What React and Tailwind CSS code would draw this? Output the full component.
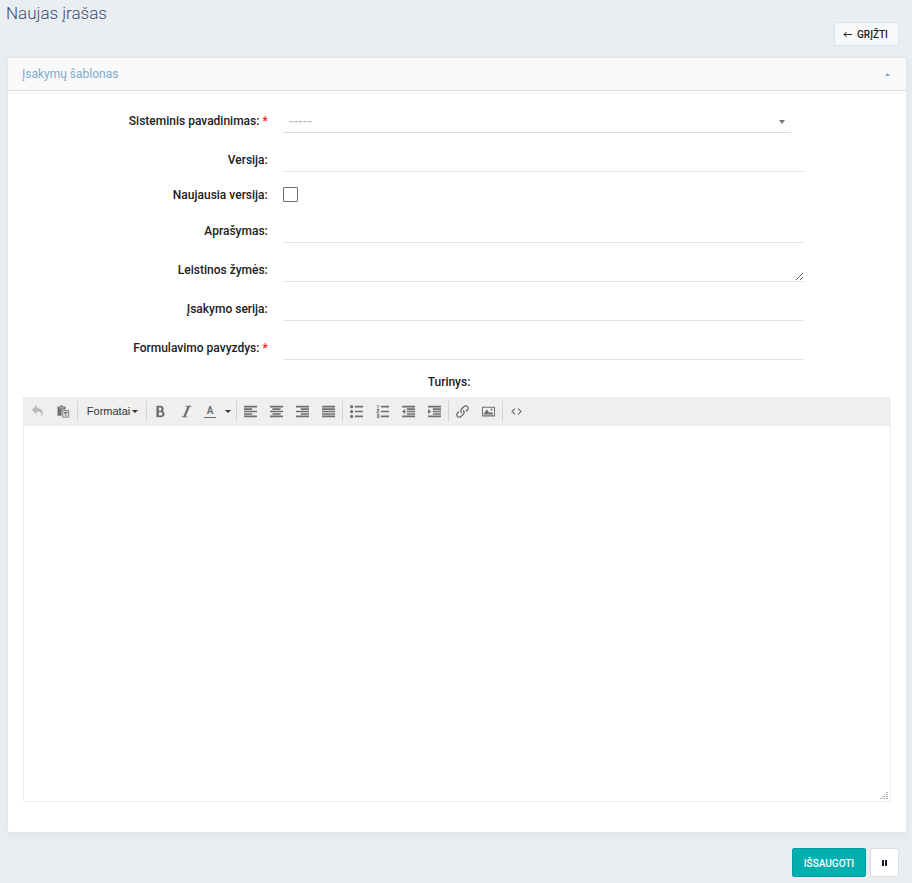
import React from 'react';
import { ImLink } from 'react-icons/im';

const ICONS = {
  undo: 'M761.862 1024c113.726-206.032 132.888-520.306-313.862-509.824v253.824l-384-384 384-384v248.372c534.962-13.942 594.57 472.214 313.862 775.628z',
  paste: 'M40 110h220c0-60 40-100 96-100s96 40 96 100h220v246h-312v500h-320zM180 190v70h352v-70zM416 416h544v576h-544zM490 490v428h396v-428zM560 550h256v130h-50l-14-50h-28v200l34 8v40h-140v-40l34-8v-200h-28l-14 50h-50z',
  bold: 'M707.88 484.652c37.498-44.542 60.12-102.008 60.12-164.652 0-141.16-114.842-256-256-256h-320v896h384c141.158 0 256-114.842 256-256 0-92.956-49.798-174.496-124.12-219.348zM384 192h101.5c55.968 0 101.5 57.42 101.5 128s-45.532 128-101.5 128h-101.5v-256zM543 832h-159v-256h159c58.45 0 106 57.42 106 128s-47.55 128-106 128z',
  italic: 'M896 64v64h-128l-320 768h128v64h-448v-64h128l320-768h-128v-64z',
  left: 'M0 64h1024v128h-1024zM0 256h640v128h-640zM0 448h1024v128h-1024zM0 640h640v128h-640zM0 832h1024v128h-1024z',
  center: 'M0 64h1024v128h-1024zM192 256h640v128h-640zM0 448h1024v128h-1024zM192 640h640v128h-640zM0 832h1024v128h-1024z',
  right: 'M0 64h1024v128h-1024zM384 256h640v128h-640zM0 448h1024v128h-1024zM384 640h640v128h-640zM0 832h1024v128h-1024z',
  justify: 'M0 64h1024v128h-1024zM0 256h1024v128h-1024zM0 448h1024v128h-1024zM0 640h1024v128h-1024zM0 832h1024v128h-1024z',
  bullist: 'M384 64h640v128h-640zM384 448h640v128h-640zM384 832h640v128h-640zM0 128a128 128 0 1 0 256 0a128 128 0 1 0-256 0zM0 512a128 128 0 1 0 256 0a128 128 0 1 0-256 0zM0 896a128 128 0 1 0 256 0a128 128 0 1 0-256 0z',
  numlist: 'M384 832h640v128h-640zM384 448h640v128h-640zM384 64h640v128h-640zM192 0v256h-64v-192h-64v-64zM128 526v50h128v64h-192v-146l128-60v-50h-128v-64h192v146zM256 704v320h-192v-64h128v-64h-128v-64h128v-64h-128v-64z',
  outdent: 'M0 64h1024v128h-1024zM384 256h640v128h-640zM384 448h640v128h-640zM384 640h640v128h-640zM0 832h1024v128h-1024zM256 320v384l-256-192z',
  indent: 'M0 64h1024v128h-1024zM384 256h640v128h-640zM384 448h640v128h-640zM384 640h640v128h-640zM0 832h1024v128h-1024zM0 704v-384l256 192z',
  image: 'M0 128v768h1024v-768zM944 816h-864v-608h864zM672 352a80 80 0 1 0 160 0a80 80 0 1 0-160 0zM160 752v-96l224-320 192 288 96-80 192 112v96z',
  code: 'M350 256l66 60-196 196 196 196-66 60-256-256zM674 256l-66 60 196 196-196 196 66 60 256-256z',
};

const Icon = ({ name }) => (
  <svg viewBox="0 0 1024 1024" className="h-[13px] w-[13px]" fill="currentColor" fillRule="evenodd">
    <path d={ICONS[name]} />
  </svg>
);

const Caret = ({ className }) => (
  <svg viewBox="0 0 6 3" preserveAspectRatio="none" className={className} fill="currentColor">
    <path d="M0 0h6L3 3z" />
  </svg>
);

const ToolButton = ({ label, children, disabled }) => (
  <button
    type="button"
    aria-label={label}
    disabled={disabled}
    className="flex h-[28px] w-[26px] items-center justify-center pr-px text-[#6f6f6f] disabled:text-[#b8b8b8]"
  >
    {children}
  </button>
);

const Separator = () => <span className="mr-px h-[21px] w-px bg-[#d4d4d4]" />;

const FormRow = ({ id, label, required, children }) => (
  <div className="mb-[11px] flex gap-[15px]">
    <label
      htmlFor={id}
      className="flex w-[28.2%] shrink-0 items-center justify-end pt-[3px] text-[12px] font-medium whitespace-nowrap text-[#212121]"
    >
      {label}:{required && <span className="ml-[3px] text-[#ff1a1a]">*</span>}
    </label>
    {children}
  </div>
);

const inputClass =
  'block h-[28px] w-[60%] border-b border-[#dfe5e6] bg-transparent px-[6px] text-[12px] outline-none';

const Toolbar = () => (
  <div className="flex h-[29px] items-center bg-[#efefef] pl-px">
    <ToolButton label="Atšaukti" disabled>
      <Icon name="undo" />
    </ToolButton>
    <ToolButton label="Įklijuoti kaip tekstą">
      <Icon name="paste" />
    </ToolButton>
    <Separator />
    <button
      type="button"
      className="flex h-[28px] w-[67px] items-center justify-center gap-[2px] font-['Liberation_Sans',sans-serif] text-[11px] text-[#333333]"
    >
      Formatai
      <Caret className="h-[3px] w-[6px]" />
    </button>
    <Separator />
    <ToolButton label="Paryškintas">
      <Icon name="bold" />
    </ToolButton>
    <ToolButton label="Kursyvinis">
      <Icon name="italic" />
    </ToolButton>
    <button
      type="button"
      aria-label="Teksto spalva"
      className="flex h-[28px] w-[36px] items-center justify-between pr-[5px] pl-[4px] text-[#333333]"
    >
      <span className="w-[12px] border-b border-[#6f6f6f] text-center text-[10px] leading-[12px] font-bold text-[#6f6f6f]">
        A
      </span>
      <Caret className="h-[3px] w-[6px]" />
    </button>
    <Separator />
    <ToolButton label="Lygiuoti kairėje">
      <Icon name="left" />
    </ToolButton>
    <ToolButton label="Centruoti">
      <Icon name="center" />
    </ToolButton>
    <ToolButton label="Lygiuoti dešinėje">
      <Icon name="right" />
    </ToolButton>
    <ToolButton label="Išlygiuoti">
      <Icon name="justify" />
    </ToolButton>
    <Separator />
    <ToolButton label="Ženklinimo sąrašas">
      <Icon name="bullist" />
    </ToolButton>
    <ToolButton label="Skaitmeninis sąrašas">
      <Icon name="numlist" />
    </ToolButton>
    <ToolButton label="Mažinti įtrauką">
      <Icon name="outdent" />
    </ToolButton>
    <ToolButton label="Didinti įtrauką">
      <Icon name="indent" />
    </ToolButton>
    <Separator />
    <ToolButton label="Įterpti nuorodą">
      <ImLink className="h-[13px] w-[13px]" />
    </ToolButton>
    <ToolButton label="Įterpti paveiksliuką">
      <Icon name="image" />
    </ToolButton>
    <Separator />
    <ToolButton label="Išeities kodas">
      <Icon name="code" />
    </ToolButton>
  </div>
);

const Editor = () => (
  <div className="relative mt-[5px] border border-[#efefef] border-t-0">
    <Toolbar />
    <textarea
      id="turinys"
      className="block h-[375px] w-full resize-none bg-white p-2 text-[12px] outline-none"
    />
    <svg
      viewBox="0 0 8 8"
      className="absolute right-[2px] bottom-[1px] h-[8px] w-[8px]"
      fill="#b5b5b5"
      shapeRendering="crispEdges"
    >
      <path d="M6 0h2v1h-2zM4 2h1v1h-1zM6 2h2v1h-2zM2 4h2v1h-2zM4 4h1v1h-1zM6 4h2v1h-2zM0 6h2v1h-2zM3 6h2v1h-2zM6 6h2v1h-2z" />
    </svg>
  </div>
);

export default function App() {
  return (
    <div className="min-h-screen bg-[#eaeef1] font-[Roboto,sans-serif]">
      <header className="flex h-[57px] items-start justify-between pr-[13px] pl-[6px]">
        <h1 className="pt-px text-[17px] leading-[24px] font-light text-[#3b4a73]">Naujas įrašas</h1>
        <a
          href="#"
          className="mt-[22px] flex h-[24px] w-[65px] items-center justify-center gap-[5px] rounded-[2px] border border-[#dde3e6] bg-[#f6f8f9] pr-[2px] text-[10px] font-medium text-[#212121]"
        >
          <svg viewBox="0 0 9 7" className="h-[7px] w-[9px]" fill="none" stroke="currentColor">
            <path d="M9 3.5H1M3.5 1L1 3.5L3.5 6" />
          </svg>
          GRĮŽTI
        </a>
      </header>

      <form onSubmit={(e) => e.preventDefault()}>
        <section className="mr-[5px] ml-[7px] rounded-[3px] border border-[#e0e5e8] bg-white shadow-[0_2px_10px_rgba(60,80,110,0.06)]">
          <div className="flex h-[33px] items-center justify-between rounded-t-[3px] border-b border-[#d9e0e3] bg-[#fafafa] pr-[16px] pl-[14px]">
            <h2 className="text-[12px] text-[#7fabcb]">Įsakymų šablonas</h2>
            <button type="button" aria-label="Suskleisti" className="text-[#7fabcb]">
              <Caret className="h-[3px] w-[5px] rotate-180" />
            </button>
          </div>

          <div className="px-[15px] pt-[14px] pb-[30px]">
            <FormRow id="pavadinimas" label="Sisteminis pavadinimas" required>
              <div className="relative w-[58.5%]">
                <select
                  id="pavadinimas"
                  className="block h-[28px] w-full appearance-none border-b border-[#d5dde0] bg-transparent pt-[5px] pl-[6px] font-['Liberation_Sans',sans-serif] text-[14px] text-[#b5b5b5] outline-none"
                >
                  <option>-----</option>
                </select>
                <Caret className="pointer-events-none absolute top-[15px] right-[6px] h-[4px] w-[6px] text-[#777777]" />
              </div>
            </FormRow>
            <FormRow id="versija" label="Versija">
              <input id="versija" type="text" className={inputClass} />
            </FormRow>
            <FormRow id="naujausia" label="Naujausia versija">
              <div className="flex h-[21px] items-end pb-[2px]">
                <input
                  id="naujausia"
                  type="checkbox"
                  className="h-[15px] w-[15px] appearance-none rounded-[1px] border border-[#6f6f6f] bg-white checked:bg-[#00b0b1]"
                />
              </div>
            </FormRow>
            <FormRow id="aprasymas" label="Aprašymas">
              <input id="aprasymas" type="text" className={inputClass} />
            </FormRow>
            <FormRow id="zymes" label="Leistinos žymės">
              <textarea id="zymes" rows="1" className={inputClass} />
            </FormRow>
            <FormRow id="serija" label="Įsakymo serija">
              <input id="serija" type="text" className={inputClass} />
            </FormRow>
            <FormRow id="pavyzdys" label="Formulavimo pavyzdys" required>
              <input id="pavyzdys" type="text" className={inputClass} />
            </FormRow>

            <label
              htmlFor="turinys"
              className="block pt-px pr-[16px] text-center text-[12px] leading-[20px] font-medium text-[#212121]"
            >
              Turinys:
            </label>
            <Editor />
          </div>
        </section>

        <div className="flex justify-end gap-[4px] pt-[15px] pr-[13px] pb-[6px]">
          <button
            type="submit"
            className="h-[29px] w-[74px] rounded-[2px] border border-[#009e9f] bg-[#00b0b1] pt-px text-[10px] font-medium text-white"
          >
            IŠSAUGOTI
          </button>
          <button
            type="button"
            aria-label="Pristabdyti"
            className="flex h-[29px] w-[29px] items-center justify-center rounded-[2px] border border-[#d9dfe3] bg-white text-[#1c1c2b]"
          >
            <svg viewBox="0 0 5 6" className="h-[6px] w-[5px]" fill="currentColor">
              <path d="M0 0h2v6h-2zM3 0h2v6h-2z" />
            </svg>
          </button>
        </div>
      </form>
    </div>
  );
}
